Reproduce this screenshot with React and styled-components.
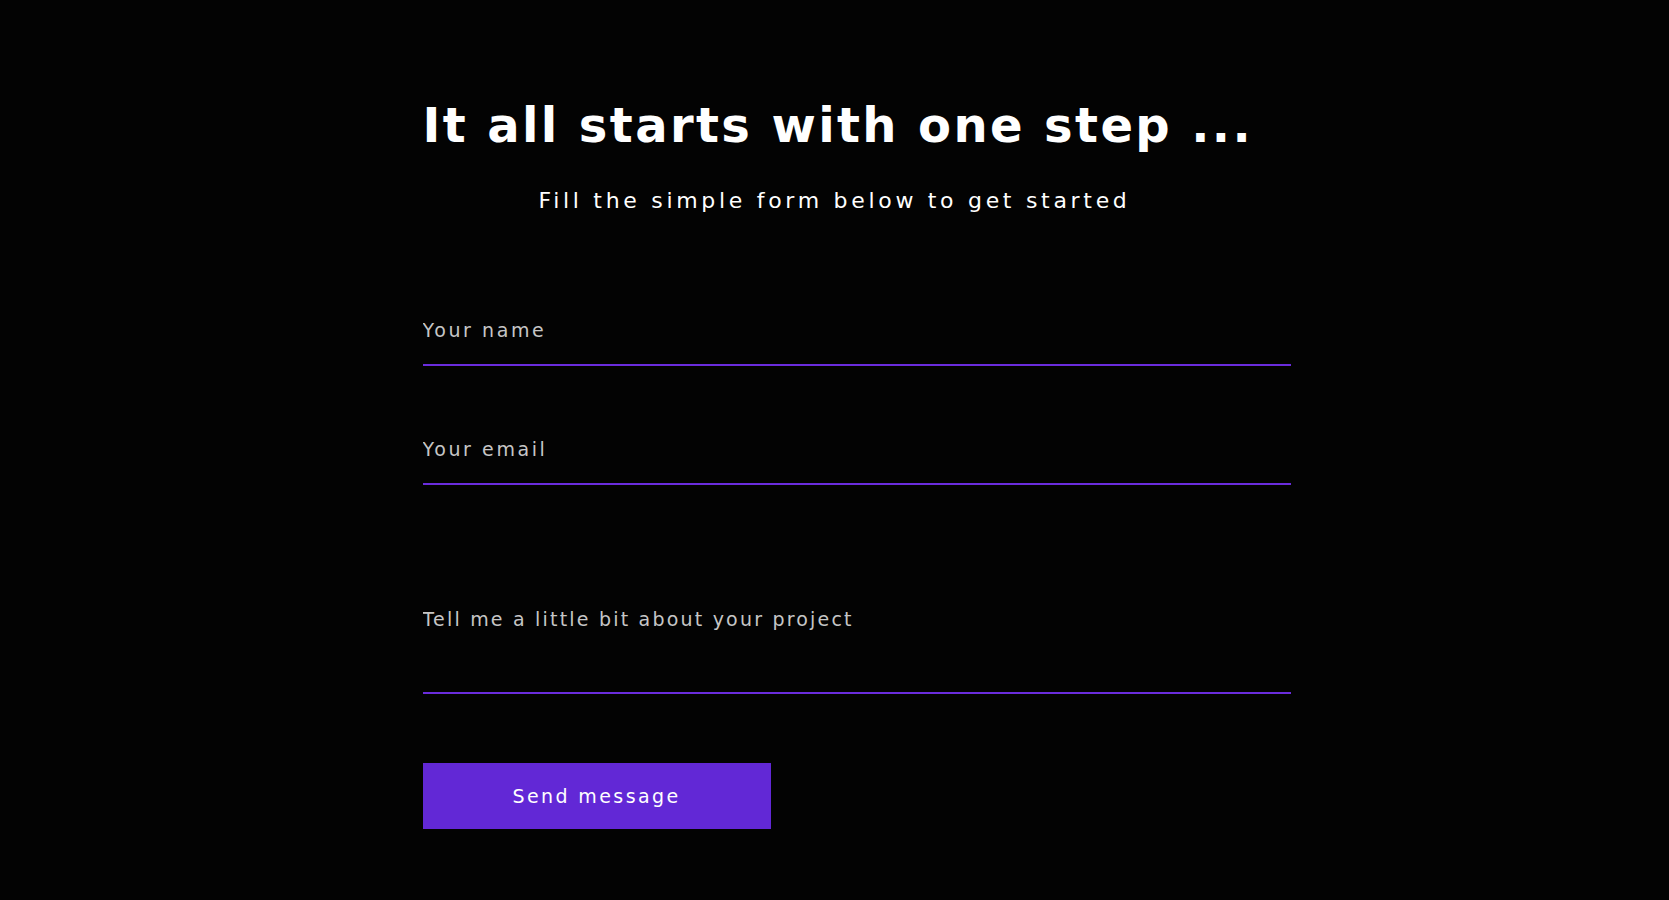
import styled, { createGlobalStyle } from "styled-components";

const GlobalStyle = createGlobalStyle`
  * {
    box-sizing: border-box;
  }
  body {
    margin: 0;
    background: #030303;
    font-family: "DejaVu Sans", "Inter", sans-serif;
  }
`;

const Page = styled.div`
  min-height: 100vh;
  padding-top: 96px;
  background: #030303;
`;

const Container = styled.div`
  width: 824px;
  margin: 0 auto;
`;

const Title = styled.h1`
  margin: 0;
  text-align: center;
  white-space: nowrap;
  color: #ffffff;
  font-size: 48px;
  line-height: 58px;
  font-weight: 700;
  letter-spacing: 2.4px;
`;

const Subtitle = styled.p`
  margin: 33px 0 0;
  text-align: center;
  white-space: nowrap;
  color: #ffffff;
  font-size: 22px;
  line-height: 28px;
  font-weight: 400;
  letter-spacing: 3.7px;
`;

const Form = styled.form`
  width: 868px;
  margin-top: 83px;
  display: flex;
  flex-direction: column;
  align-items: flex-start;
`;

const Input = styled.input`
  display: block;
  width: 100%;
  height: 68px;
  padding: 20px 0 22px;
  margin-bottom: 51px;
  border: none;
  border-bottom: 2px solid #6a2cdc;
  background: transparent;
  color: #ffffff;
  font-family: inherit;
  font-size: 19px;
  line-height: 24px;
  letter-spacing: 2.6px;
  outline: none;
  &::placeholder {
    color: #c6c6c6;
  }
`;

const TextArea = styled.textarea`
  display: block;
  width: 100%;
  height: 158px;
  padding: 71px 0 0;
  border: none;
  border-bottom: 2px solid #6a2cdc;
  background: transparent;
  color: #ffffff;
  font-family: inherit;
  font-size: 19px;
  line-height: 24px;
  letter-spacing: 2.2px;
  resize: none;
  outline: none;
  &::placeholder {
    color: #c6c6c6;
  }
`;

const SendButton = styled.button`
  margin-top: 69px;
  width: 348px;
  height: 66px;
  border: none;
  background: #6228d6;
  color: #ffffff;
  font-family: inherit;
  font-size: 19px;
  letter-spacing: 2.4px;
  cursor: pointer;
  &:hover {
    background: #5220bb;
  }
`;

const App = () => {
  return (
    <Page>
      <GlobalStyle />
      <Container>
        <Title>It all starts with one step ...</Title>
        <Subtitle>Fill the simple form below to get started</Subtitle>
        <Form onSubmit={(e) => e.preventDefault()}>
          <Input type="text" placeholder="Your name" />
          <Input type="email" placeholder="Your email" />
          <TextArea placeholder="Tell me a little bit about your project" />
          <SendButton type="submit">Send message</SendButton>
        </Form>
      </Container>
    </Page>
  );
};

export default App;
